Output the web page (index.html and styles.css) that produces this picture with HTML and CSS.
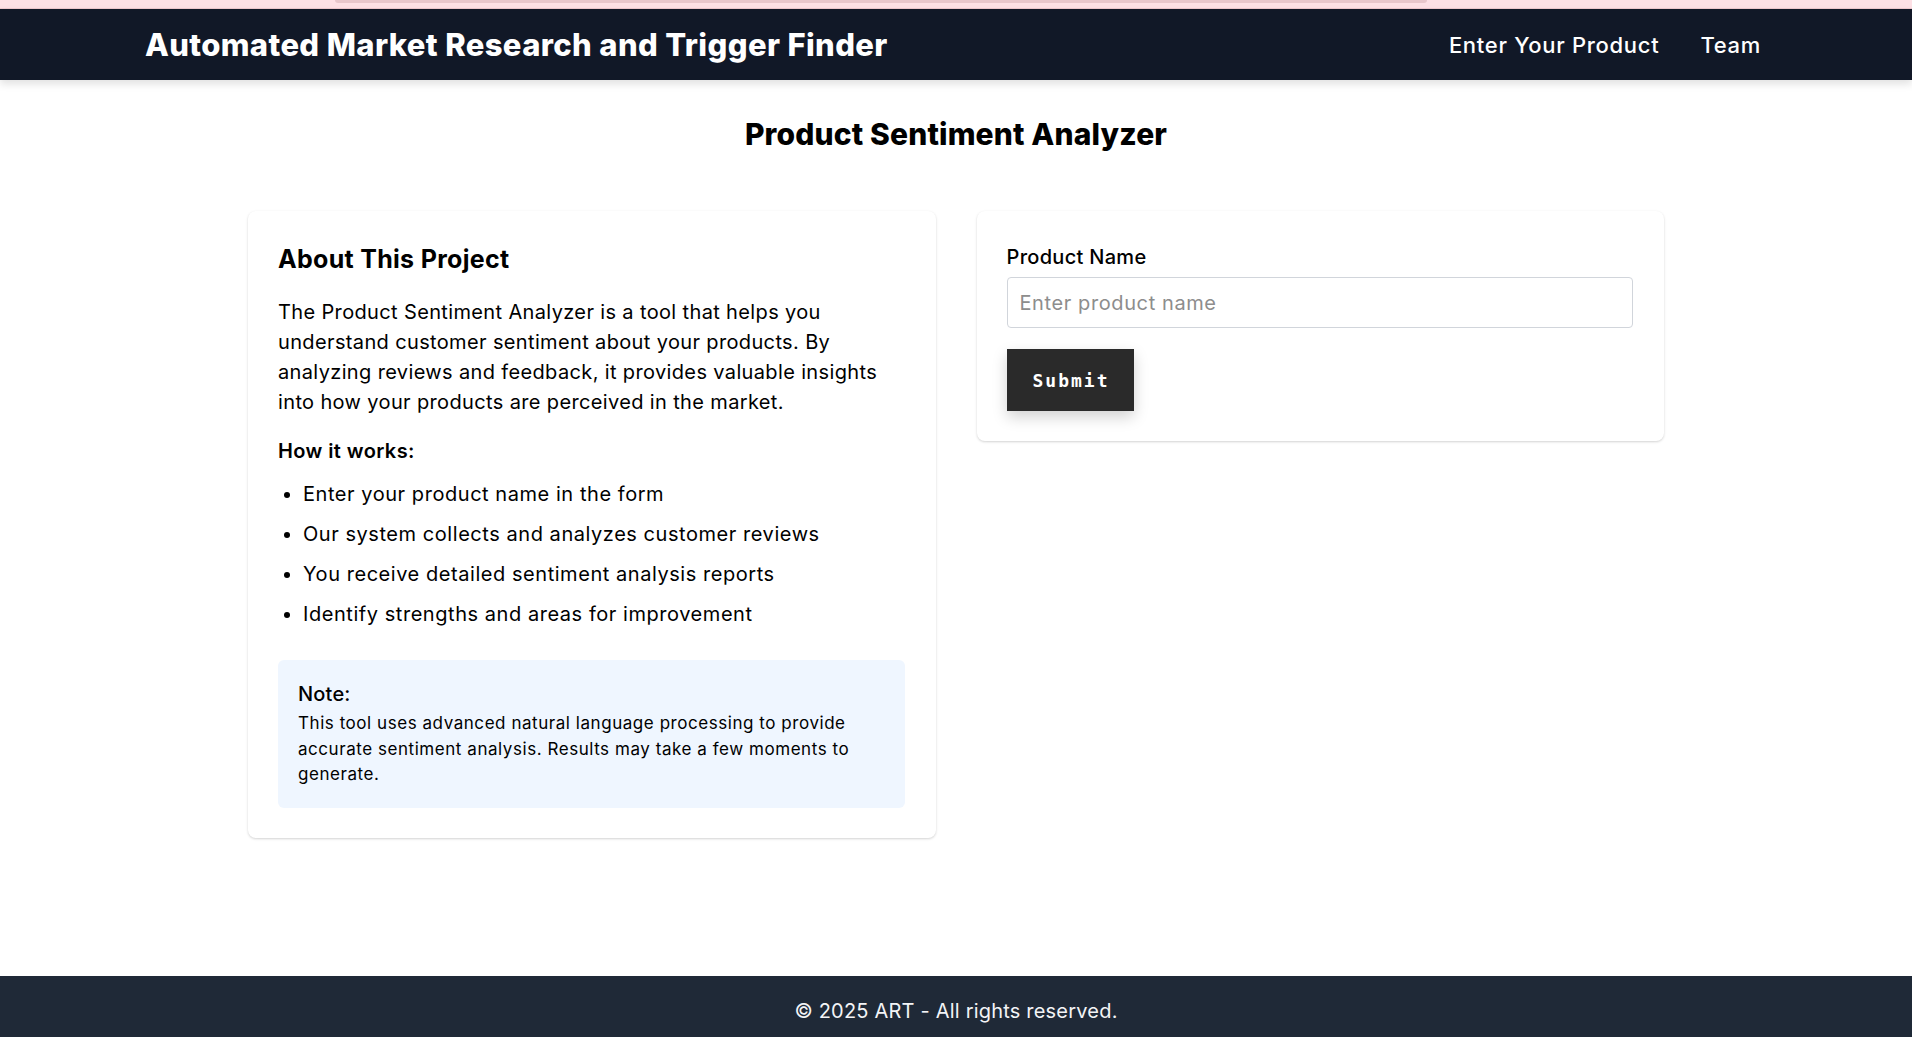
FILE: index.html
```html
<!DOCTYPE html>
<html lang="en">
<head>
<meta charset="utf-8">
<title>Product Sentiment Analyzer</title>
<link rel="stylesheet" href="styles.css">
</head>
<body>
<div class="topstrip"><div class="topstrip-bar"></div></div>
<header class="navbar">
  <div class="brand">Automated Market Research and Trigger Finder</div>
  <nav class="nav-links">
    <a href="#" class="nav-link">Enter Your Product</a>
    <a href="#" class="nav-link">Team</a>
  </nav>
</header>
<main class="main">
  <h1 class="page-title">Product Sentiment Analyzer</h1>
  <div class="grid">
    <section class="card about">
      <h2 class="card-title">About This Project</h2>
      <p class="about-text">The Product Sentiment Analyzer is a tool that helps you understand customer sentiment about your products. By analyzing reviews and feedback, it provides valuable insights into how your products are perceived in the market.</p>
      <h3 class="how-title">How it works:</h3>
      <ul class="how-list">
        <li>Enter your product name in the form</li>
        <li>Our system collects and analyzes customer reviews</li>
        <li>You receive detailed sentiment analysis reports</li>
        <li>Identify strengths and areas for improvement</li>
      </ul>
      <div class="note">
        <p class="note-title">Note:</p>
        <p class="note-text">This tool uses advanced natural language processing to provide accurate sentiment analysis. Results may take a few moments to generate.</p>
      </div>
    </section>
    <section class="card form-card">
      <form class="product-form">
        <label class="field-label" for="product">Product Name</label>
        <input class="field-input" id="product" type="text" placeholder="Enter product name">
        <button class="submit-btn" type="button">Submit</button>
      </form>
    </section>
  </div>
</main>
<footer class="footer">
  <p class="footer-text">© 2025 ART - All rights reserved.</p>
</footer>
</body>
</html>
```

FILE: styles.css
```css
* { box-sizing: border-box; }

html, body { margin: 0; padding: 0; }

body {
  font-family: Inter, "Open Sans", "Liberation Sans", sans-serif;
  color: #000;
  background: #fff;
  min-height: 100vh;
  display: flex;
  flex-direction: column;
  overflow: hidden;
}

.topstrip {
  height: 9px;
  background: #fde0e5;
  border-bottom: 1px solid #efc9cf;
  display: flex;
  justify-content: center;
}

.topstrip-bar {
  width: 1092px;
  height: 3px;
  margin-left: -150px;
  background: #e8c6cb;
  border-radius: 0 0 6px 6px;
}

.navbar {
  height: 71px;
  background: #111827;
  display: flex;
  align-items: center;
  justify-content: space-between;
  padding: 0 151px 0 145px;
  box-shadow: 0 4px 8px rgba(0, 0, 0, 0.12);
  position: relative;
  z-index: 1;
}

.brand {
  color: #fff;
  font-size: 31px;
  font-weight: 800;
  letter-spacing: 0.37px;
}

.nav-links {
  display: flex;
  gap: 41px;
}

.nav-link {
  color: #fff;
  text-decoration: none;
  font-size: 22px;
  font-weight: 500;
  letter-spacing: 0.7px;
}

.main {
  flex: 1;
  padding-top: 36px;
}

.page-title {
  margin: 0 0 59px;
  text-align: center;
  font-size: 30px;
  line-height: 36px;
  font-weight: 800;
  letter-spacing: 0.15px;
}

.grid {
  width: 1416px;
  margin: 0 auto;
  display: grid;
  grid-template-columns: 1fr 1fr;
  gap: 41px;
  align-items: start;
}

.card {
  background: #fff;
  border-radius: 8px;
  box-shadow: 0 1px 3px rgba(0, 0, 0, 0.12), 0 1px 2px rgba(0, 0, 0, 0.06);
}

.about {
  padding: 32px 31px 30px 30px;
}

.card-title {
  margin: 0 0 22px;
  font-size: 25px;
  line-height: 32px;
  font-weight: 700;
  letter-spacing: 0.3px;
}

.about-text {
  margin: 0;
  font-size: 20px;
  line-height: 30px;
  letter-spacing: 0.36px;
}

.how-title {
  margin: 20px 0 14px;
  font-size: 20px;
  line-height: 28px;
  font-weight: 600;
  letter-spacing: 0.4px;
}

.how-list {
  margin: 0;
  padding-left: 25px;
  list-style: disc;
}

.how-list li {
  font-size: 20px;
  line-height: 30px;
  letter-spacing: 0.55px;
  margin-bottom: 10px;
}

.how-list li:last-child { margin-bottom: 0; }

.note {
  margin-top: 31px;
  background: #eff6ff;
  border-radius: 6px;
  padding: 20px 20px 20px;
}

.note-title {
  margin: 0 0 3px;
  font-size: 20px;
  line-height: 28px;
  font-weight: 500;
  letter-spacing: 0.2px;
}

.note-text {
  margin: 0;
  font-size: 17px;
  line-height: 25.5px;
  letter-spacing: 0.55px;
}

.form-card {
  padding: 32px 31px 30px 30px;
}

.product-form {
  display: flex;
  flex-direction: column;
  align-items: flex-start;
}

.field-label {
  font-size: 20px;
  line-height: 28px;
  font-weight: 500;
  letter-spacing: 0.3px;
  margin-bottom: 6px;
}

.field-input {
  width: 100%;
  height: 51px;
  border: 1px solid #d1d5db;
  border-radius: 4px;
  padding: 0 12px;
  font-family: inherit;
  font-size: 20px;
  letter-spacing: 0.6px;
  color: #111;
  outline: none;
}

.field-input::placeholder {
  color: #8d8d8d;
}

.submit-btn {
  margin-top: 21px;
  height: 62px;
  padding: 0 24px 0 26px;
  background: #2a2a2a;
  color: #fff;
  border: none;
  border-radius: 0;
  font-family: "DejaVu Sans Mono", "Liberation Mono", monospace;
  font-weight: 700;
  font-size: 18px;
  letter-spacing: 2px;
  box-shadow: 0 6px 14px rgba(0, 0, 0, 0.18);
  cursor: pointer;
}

.footer {
  height: 61px;
  background: #1f2937;
  padding-top: 22px;
}

.footer-text {
  margin: 0;
  text-align: center;
  color: #f3f4f6;
  font-size: 20px;
  line-height: 26px;
  letter-spacing: 0.2px;
}
```
